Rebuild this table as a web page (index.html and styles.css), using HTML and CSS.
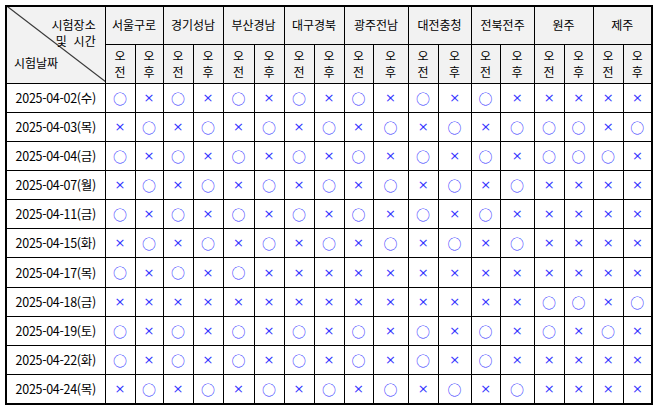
FILE: index.html
```html
<!DOCTYPE html>
<html lang="ko">
<head>
<meta charset="utf-8">
<title>시험일정</title>
<link rel="stylesheet" href="styles.css">
</head>
<body>
<table class="sched">
<colgroup>
<col class="c-date">
<col style="width:30px"><col style="width:28px"><col style="width:30px"><col style="width:30px">
<col style="width:31px"><col style="width:30px"><col style="width:30px"><col style="width:30px">
<col style="width:29px"><col style="width:35px"><col style="width:30px"><col style="width:33px">
<col style="width:29px"><col style="width:34px"><col style="width:30px"><col style="width:29px">
<col style="width:30px"><col style="width:29px">
</colgroup>
<thead>
<tr class="h1">
<th rowspan="2" class="corner"><div class="corner-stack"><div class="tri-a"></div><div class="tri-b"></div><div class="corner-in"><span class="ct1">시험장소</span><span class="ct2">및&nbsp;&nbsp;시간</span><span class="ct3">시험날짜</span></div></div></th>
<th colspan="2">서울구로</th><th colspan="2">경기성남</th><th colspan="2">부산경남</th><th colspan="2">대구경북</th><th colspan="2">광주전남</th><th colspan="2">대전충청</th><th colspan="2">전북전주</th><th colspan="2">원주</th><th colspan="2">제주</th>
</tr>
<tr class="h2">
<th>오<br>전</th><th>오<br>후</th><th>오<br>전</th><th>오<br>후</th><th>오<br>전</th><th>오<br>후</th><th>오<br>전</th><th>오<br>후</th><th>오<br>전</th><th>오<br>후</th><th>오<br>전</th><th>오<br>후</th><th>오<br>전</th><th>오<br>후</th><th>오<br>전</th><th>오<br>후</th><th>오<br>전</th><th>오<br>후</th>
</tr>
</thead>
<tbody>
<tr><td class="date">2025-04-02(수)</td><td class="o">○</td><td class="x">×</td><td class="o">○</td><td class="x">×</td><td class="o">○</td><td class="x">×</td><td class="o">○</td><td class="x">×</td><td class="o">○</td><td class="x">×</td><td class="o">○</td><td class="x">×</td><td class="o">○</td><td class="x">×</td><td class="x">×</td><td class="x">×</td><td class="x">×</td><td class="x">×</td></tr>
<tr><td class="date">2025-04-03(목)</td><td class="x">×</td><td class="o">○</td><td class="x">×</td><td class="o">○</td><td class="x">×</td><td class="o">○</td><td class="x">×</td><td class="o">○</td><td class="x">×</td><td class="o">○</td><td class="x">×</td><td class="o">○</td><td class="x">×</td><td class="o">○</td><td class="o">○</td><td class="o">○</td><td class="x">×</td><td class="o">○</td></tr>
<tr><td class="date">2025-04-04(금)</td><td class="o">○</td><td class="x">×</td><td class="o">○</td><td class="x">×</td><td class="o">○</td><td class="x">×</td><td class="o">○</td><td class="x">×</td><td class="o">○</td><td class="x">×</td><td class="o">○</td><td class="x">×</td><td class="o">○</td><td class="x">×</td><td class="o">○</td><td class="o">○</td><td class="o">○</td><td class="x">×</td></tr>
<tr><td class="date">2025-04-07(월)</td><td class="x">×</td><td class="o">○</td><td class="x">×</td><td class="o">○</td><td class="x">×</td><td class="o">○</td><td class="x">×</td><td class="o">○</td><td class="x">×</td><td class="o">○</td><td class="x">×</td><td class="o">○</td><td class="x">×</td><td class="o">○</td><td class="x">×</td><td class="x">×</td><td class="x">×</td><td class="x">×</td></tr>
<tr><td class="date">2025-04-11(금)</td><td class="o">○</td><td class="x">×</td><td class="o">○</td><td class="x">×</td><td class="o">○</td><td class="x">×</td><td class="o">○</td><td class="x">×</td><td class="o">○</td><td class="x">×</td><td class="o">○</td><td class="x">×</td><td class="o">○</td><td class="x">×</td><td class="x">×</td><td class="x">×</td><td class="x">×</td><td class="x">×</td></tr>
<tr><td class="date">2025-04-15(화)</td><td class="x">×</td><td class="o">○</td><td class="x">×</td><td class="o">○</td><td class="x">×</td><td class="o">○</td><td class="x">×</td><td class="o">○</td><td class="x">×</td><td class="o">○</td><td class="x">×</td><td class="o">○</td><td class="x">×</td><td class="o">○</td><td class="x">×</td><td class="x">×</td><td class="x">×</td><td class="x">×</td></tr>
<tr class="tall"><td class="date">2025-04-17(목)</td><td class="o">○</td><td class="x">×</td><td class="o">○</td><td class="x">×</td><td class="o">○</td><td class="x">×</td><td class="x">×</td><td class="x">×</td><td class="x">×</td><td class="x">×</td><td class="x">×</td><td class="x">×</td><td class="x">×</td><td class="x">×</td><td class="x">×</td><td class="x">×</td><td class="x">×</td><td class="x">×</td></tr>
<tr><td class="date">2025-04-18(금)</td><td class="x">×</td><td class="x">×</td><td class="x">×</td><td class="x">×</td><td class="x">×</td><td class="x">×</td><td class="x">×</td><td class="x">×</td><td class="x">×</td><td class="x">×</td><td class="x">×</td><td class="x">×</td><td class="x">×</td><td class="x">×</td><td class="o">○</td><td class="o">○</td><td class="x">×</td><td class="o">○</td></tr>
<tr><td class="date">2025-04-19(토)</td><td class="o">○</td><td class="x">×</td><td class="o">○</td><td class="x">×</td><td class="o">○</td><td class="x">×</td><td class="o">○</td><td class="x">×</td><td class="o">○</td><td class="x">×</td><td class="o">○</td><td class="x">×</td><td class="o">○</td><td class="x">×</td><td class="o">○</td><td class="x">×</td><td class="o">○</td><td class="x">×</td></tr>
<tr><td class="date">2025-04-22(화)</td><td class="o">○</td><td class="x">×</td><td class="o">○</td><td class="x">×</td><td class="o">○</td><td class="x">×</td><td class="o">○</td><td class="x">×</td><td class="o">○</td><td class="x">×</td><td class="o">○</td><td class="x">×</td><td class="o">○</td><td class="x">×</td><td class="x">×</td><td class="x">×</td><td class="x">×</td><td class="x">×</td></tr>
<tr class="tall"><td class="date">2025-04-24(목)</td><td class="x">×</td><td class="o">○</td><td class="x">×</td><td class="o">○</td><td class="x">×</td><td class="o">○</td><td class="x">×</td><td class="o">○</td><td class="x">×</td><td class="o">○</td><td class="x">×</td><td class="o">○</td><td class="x">×</td><td class="o">○</td><td class="x">×</td><td class="x">×</td><td class="x">×</td><td class="x">×</td></tr>
</tbody>
</table>
</body>
</html>
```
FILE: styles.css
```css
html, body {
  margin: 0;
  padding: 0;
  background: #ffffff;
}
body {
  padding: 5px 0 0 5px;
  font-family: "Noto Sans CJK KR", "Noto Sans", sans-serif;
  color: #000;
}
.sched {
  border-collapse: collapse;
  table-layout: fixed;
  width: 647px;
  border: 2px solid #000;
  font-size: 12px;
}
.c-date { width: 99px; }
.sched th, .sched td {
  border: 1px solid #000;
  padding: 0;
  text-align: center;
  vertical-align: middle;
}
.sched th {
  background: #f2f2f2;
  font-weight: normal;
  line-height: 16px;
}
.h1 { height: 38px; }
.h2 { height: 39px; }
.sched tbody tr { height: 29px; }
.sched tbody tr.tall { height: 30px; }
.sched th.corner {
  vertical-align: top;
}
.corner-stack {
  display: grid;
  height: 75px;
  overflow: hidden;
}
.tri-a, .tri-b {
  grid-area: 1 / 1;
  width: 0;
  height: 0;
  border-style: solid;
  border-width: 75px 0 0 98px;
}
.tri-a {
  border-color: #3a3a3a transparent transparent #f2f2f2;
}
.tri-b {
  margin-left: 1.7px;
  border-color: #f2f2f2 transparent transparent transparent;
}
.corner-in {
  grid-area: 1 / 1;
  display: flex;
  flex-direction: column;
  padding: 10px 11px 0 7px;
}
.ct1, .ct2 { align-self: flex-end; }
.ct3 { align-self: flex-start; margin-top: 6px; }
.date {
  font-size: 12.5px;
  letter-spacing: -0.3px;
  text-align: center;
}
.o, .x {
  color: #3535ff;
}
.o { font-size: 14px; }
.x { font-family: "DejaVu Sans", sans-serif; font-size: 13px; }
```
